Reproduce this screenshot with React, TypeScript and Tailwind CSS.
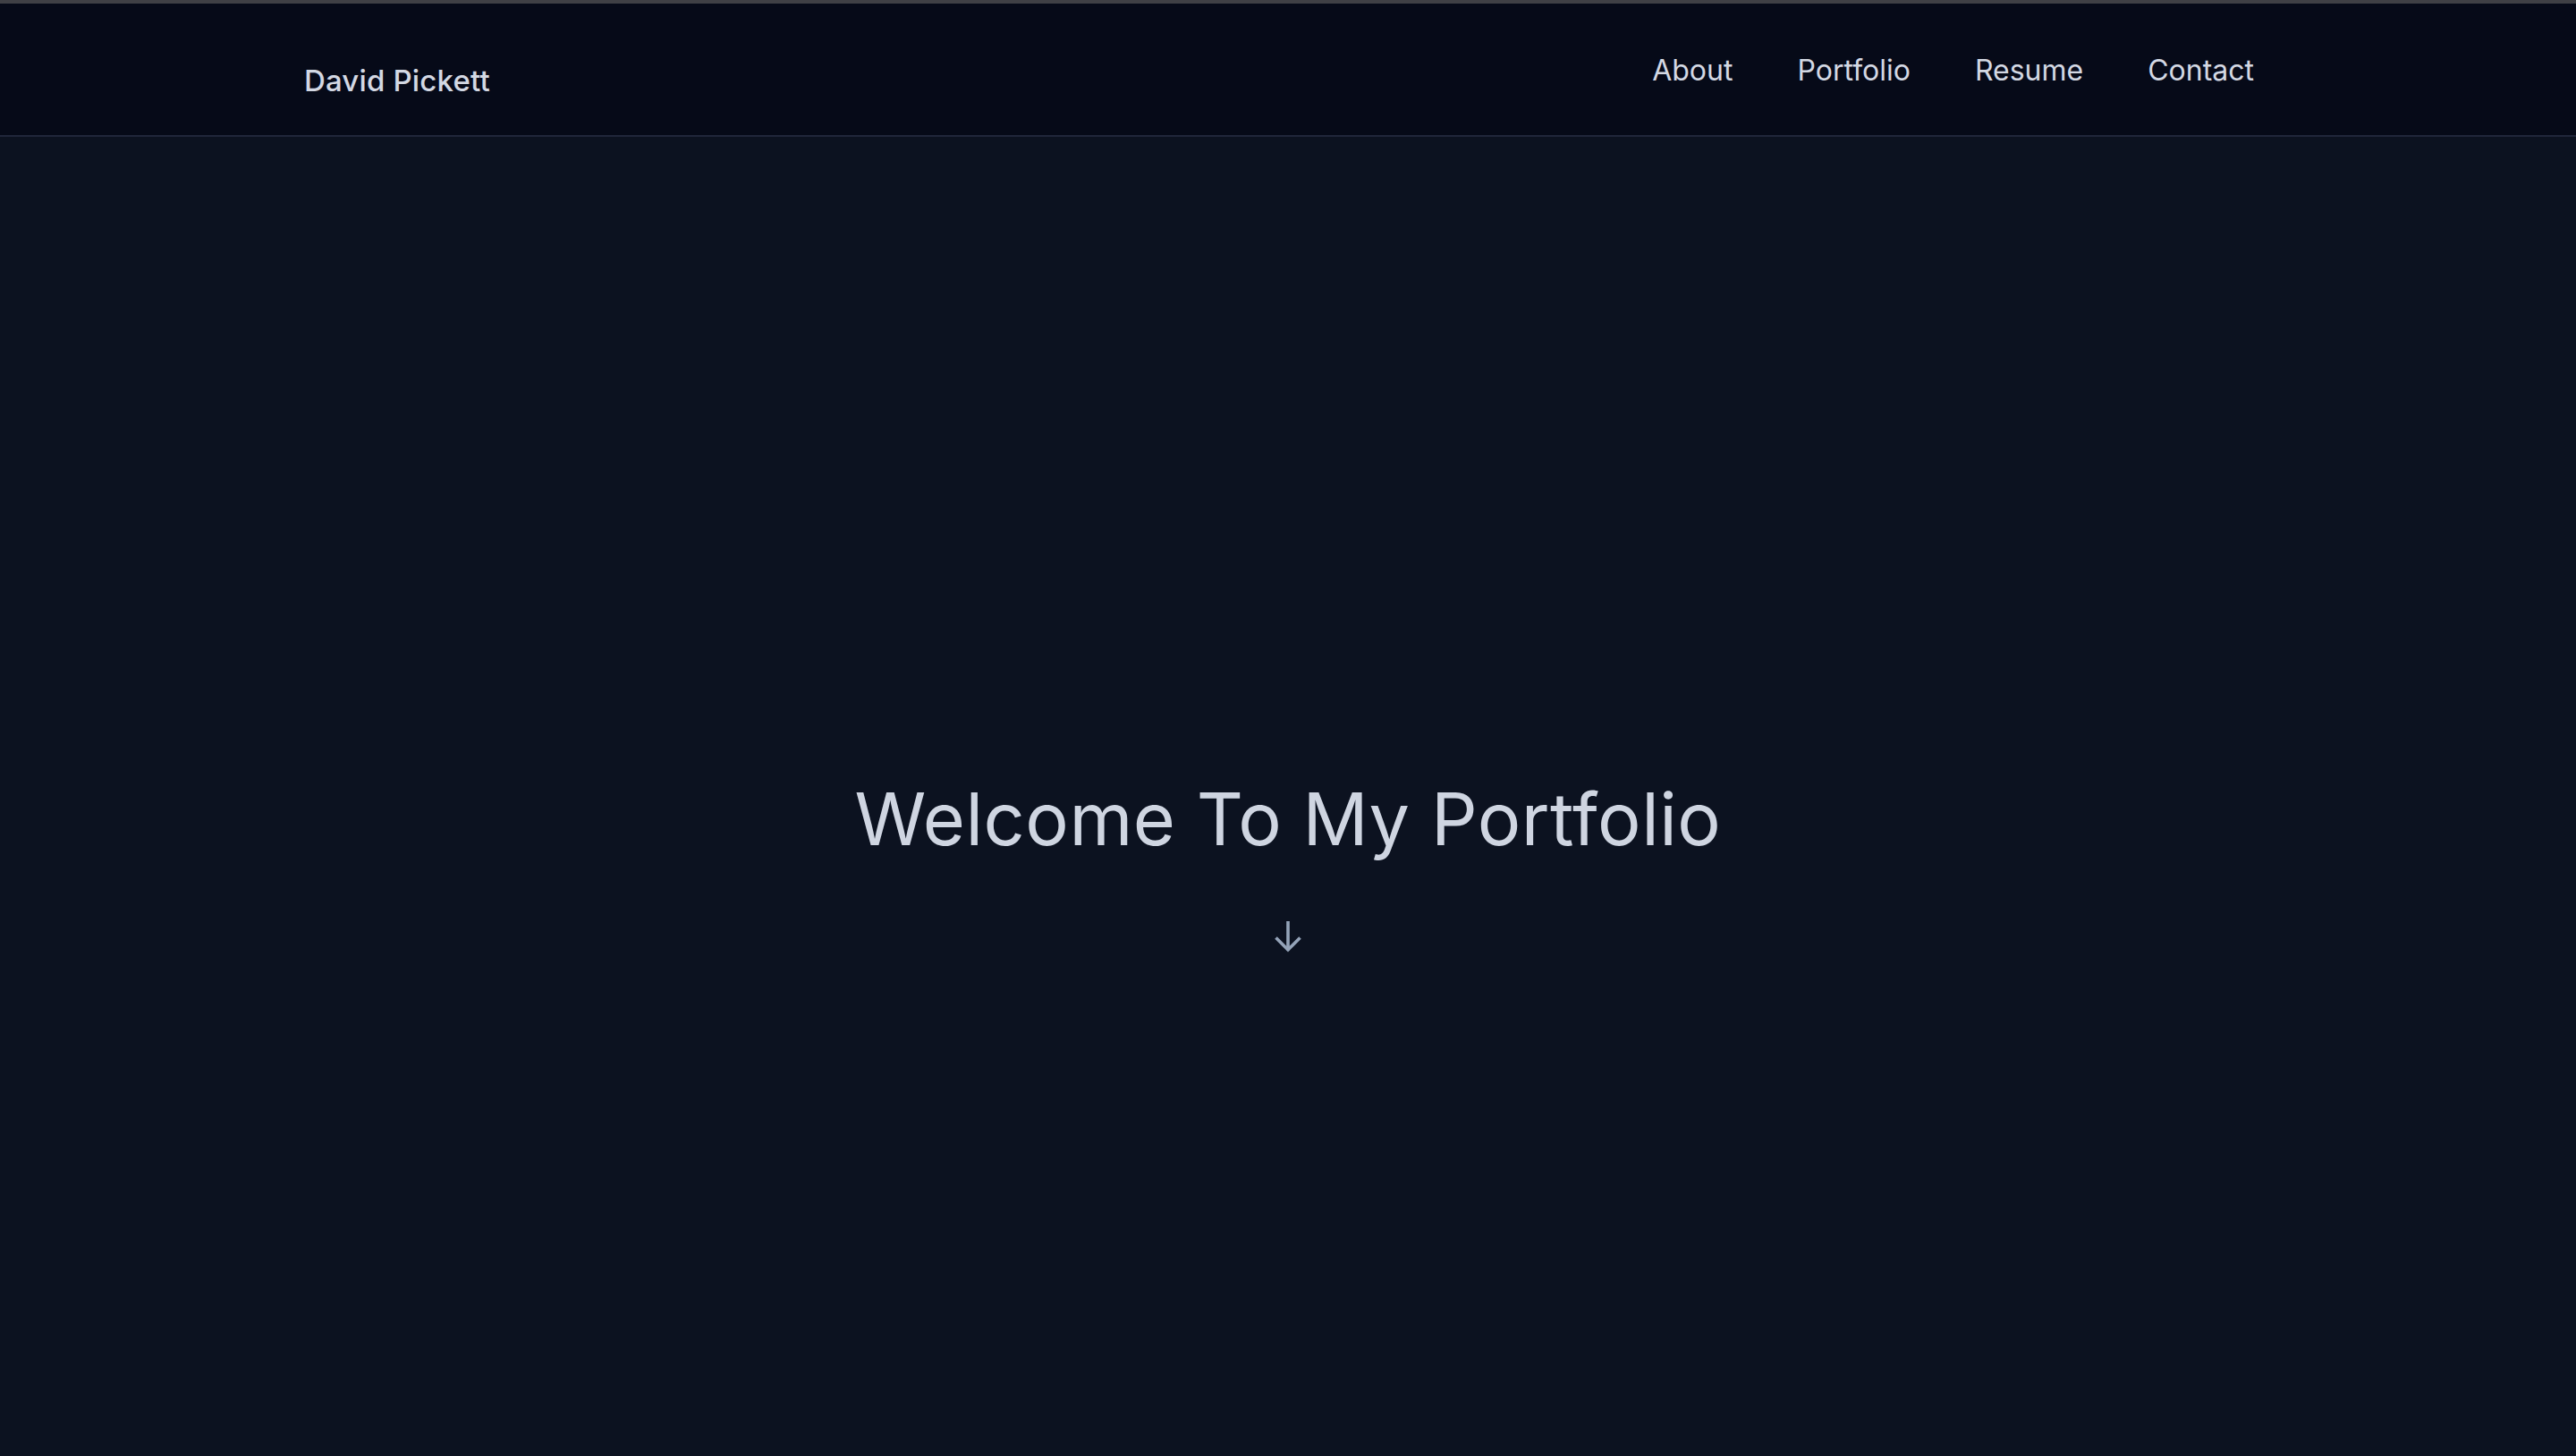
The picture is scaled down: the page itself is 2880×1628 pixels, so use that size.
export default function App() {
  return (
    <div className="min-h-screen bg-[#0c1220] font-['Inter','Liberation_Sans',sans-serif]">
      <header className="border-t-4 border-b-2 border-t-[#3f4045] border-b-[#20263a] bg-[#060a18]">
        <div className="flex h-[147px] justify-between pl-[340px] pr-[360px]">
          <div className="pt-[66px] text-[33px] font-medium leading-[40px] tracking-[0.005em] text-[#d3d8e3]">
            David Pickett
          </div>
          <nav className="flex gap-[72px] pt-[55px] text-[32px] leading-[40px] text-[#d3d8e3]">
            <a>About</a>
            <a>Portfolio</a>
            <a>Resume</a>
            <a>Contact</a>
          </nav>
        </div>
      </header>
      <main className="flex h-[1628px] flex-col items-center justify-center">
        <h1 className="text-[81px] font-normal leading-[96px] tracking-[0.006em] text-[#cfd5e1]">
          Welcome To My Portfolio
        </h1>
        <svg
          className="mt-[64px]"
          width="32"
          height="38"
          viewBox="0 0 32 38"
          fill="none"
          stroke="#94a3b8"
          strokeWidth="3.6"
        >
          <path d="M16 2v33" />
          <path d="M2.5 20.5 16 34l13.5-13.5" />
        </svg>
      </main>
    </div>
  );
}
